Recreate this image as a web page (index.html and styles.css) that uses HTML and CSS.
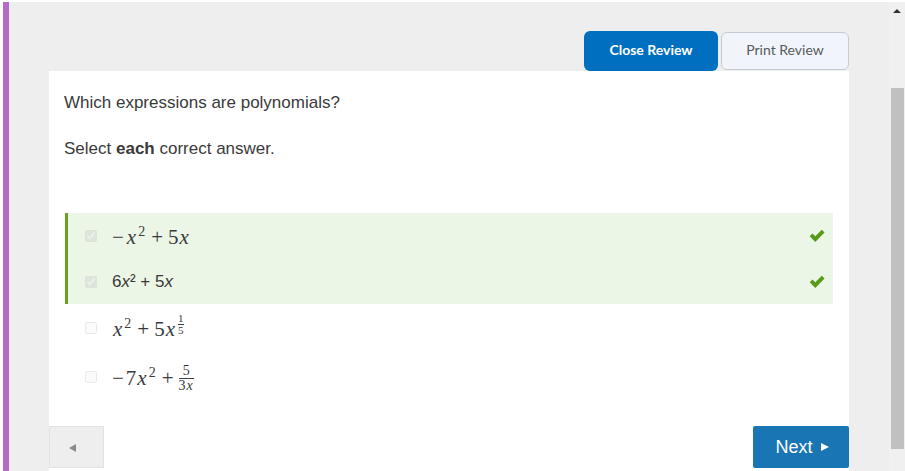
FILE: index.html
```html
<!DOCTYPE html>
<html lang="en">
<head>
    <meta charset="UTF-8">
    <meta name="viewport" content="width=device-width, initial-scale=1.0">
    <title>Review</title>
    <link rel="stylesheet" href="styles.css">
</head>
<body>
    <div class="page">
        <div class="accent"></div>
        <div class="main">
            <div class="toolbar">
                <button class="btn-close">Close Review</button>
                <button class="btn-print">Print Review</button>
            </div>
            <div class="panel">
                <p class="question">Which expressions are polynomials?</p>
                <p class="question">Select <b>each</b> correct answer.</p>

                <div class="answers">
                    <div class="answer correct">
                        <input type="checkbox" checked disabled>
                        <span class="math"><span class="op">&minus;</span><i>x</i><sup>2</sup><span class="op plus">+</span>5<i>x</i></span>
                        <svg class="tick" viewBox="0 0 14 12"><path d="M0.6 6.2 L3 3.9 L5.5 6.3 L11.2 0.6 L13.6 2.9 L5.5 11.2 Z" fill="#5a9a1a"/></svg>
                    </div>
                    <div class="answer correct">
                        <input type="checkbox" checked disabled>
                        <span class="plain">6<i>x</i>² + 5<i>x</i></span>
                        <svg class="tick" viewBox="0 0 14 12"><path d="M0.6 6.2 L3 3.9 L5.5 6.3 L11.2 0.6 L13.6 2.9 L5.5 11.2 Z" fill="#5a9a1a"/></svg>
                    </div>
                    <div class="answer">
                        <input type="checkbox" disabled>
                        <span class="math"><i>x</i><sup>2</sup><span class="op plus">+</span>5<i>x</i><span class="frac frac-sup"><span class="num">1</span><span>5</span></span></span>
                    </div>
                    <div class="answer">
                        <input type="checkbox" disabled>
                        <span class="math"><span class="op">&minus;</span>7<i>x</i><sup>2</sup><span class="op plus">+</span><span class="frac"><span class="num">5</span><span>3<i>x</i></span></span></span>
                    </div>
                </div>

                <div class="nav">
                    <button class="btn-prev"><span class="arrow-left"></span></button>
                    <button class="btn-next">Next<span class="arrow-right"></span></button>
                </div>
            </div>
        </div>
        <div class="scrollbar">
            <div class="scroll-up"></div>
            <div class="scroll-thumb"></div>
        </div>
    </div>
</body>
</html>
```

FILE: styles.css
```css
html, body {
    margin: 0;
    height: 471px;
    overflow: hidden;
    background: white;
}
.page {
    display: flex;
    height: 469px;
    margin-top: 2px;
    padding-left: 3px;
}
.accent {
    width: 6px;
    background-color: #b56cc9;
}
.main {
    flex: 1;
    background-color: #eeeeee;
    padding: 0 40px;
}
.toolbar {
    display: flex;
    justify-content: flex-end;
    align-items: center;
    gap: 3px;
    height: 40px;
    padding-top: 29px;
}
.toolbar button {
    font-family: Lato, sans-serif;
    font-size: 14px;
    cursor: pointer;
    padding-bottom: 5px;
}
.btn-close {
    width: 134px;
    height: 40px;
    background-color: #006fbf;
    color: white;
    font-weight: bold;
    border: none;
    border-radius: 6px;
}
.btn-print {
    width: 128px;
    height: 38px;
    background-color: #f1f5fb;
    color: #565a5c;
    border: 1px solid #c4ccd3;
    border-radius: 6px;
}
.panel {
    background: white;
    height: 400px;
    padding: 1px 16px 0 15px;
    box-sizing: border-box;
    position: relative;
}
.question {
    margin: 0;
    font-family: "Liberation Sans", Arial, sans-serif;
    font-size: 17px;
    line-height: 46px;
    height: 46px;
    color: #3a3a3a;
}
.question:first-child {
    margin-top: 8px;
}
.answers {
    margin-top: 41px;
    margin-left: 1px;
}
.answer {
    display: flex;
    align-items: center;
    height: 46px;
    padding-left: 20px;
    padding-right: 8px;
    color: #3a3a3a;
}
.answer:nth-child(2) {
    height: 45px;
}
.answer:nth-child(3) {
    height: 48px;
}
.answer:nth-child(4) {
    height: 50px;
}
.answer.correct {
    background-color: #ebf6e6;
    border-left: 3px solid #6aa01f;
    padding-left: 17px;
}
.answer input {
    width: 12px;
    height: 12px;
    margin: 0 15px 0 0;
    opacity: 0.45;
}
.math {
    font-family: "Liberation Serif", "Times New Roman", serif;
    font-size: 21px;
    color: #3a3a3a;
    display: inline-flex;
    align-items: center;
    padding-top: 2px;
}
.math i {
    padding-right: 1px;
    padding-left: 1px;
}
.math sup {
    font-size: 14px;
    line-height: 1;
    margin-top: -10px;
    margin-left: 1px;
}
.op {
    margin-right: 2px;
}
.op.plus {
    margin: 0 5px 0 6px;
}
.plain {
    font-family: "Liberation Sans", Arial, sans-serif;
    font-size: 17px;
}
.frac {
    display: inline-flex;
    flex-direction: column;
    align-items: center;
    font-size: 14px;
    line-height: 14px;
}
.frac .num {
    border-bottom: 1px solid #3a3a3a;
    align-self: stretch;
    text-align: center;
}
.frac-sup {
    font-size: 11px;
    line-height: 11px;
    margin-top: -10px;
    margin-left: 2px;
}
.tick {
    width: 16px;
    height: 14px;
    margin-left: auto;
}
.nav {
    position: absolute;
    left: 0;
    right: 0;
    top: 355px;
    display: flex;
    justify-content: space-between;
}
.btn-prev {
    width: 55px;
    height: 42px;
    background-color: #eeeeee;
    border: 1px solid #e2e2e2;
    cursor: pointer;
    padding: 0 8px 0 0;
}
.arrow-left {
    display: inline-block;
    border-style: solid;
    border-width: 4px 7px 4px 0;
    border-color: transparent #8a8a8a transparent transparent;
}
.btn-next {
    width: 96px;
    height: 42px;
    background-color: #1a75b5;
    color: white;
    font-family: "Liberation Sans", Arial, sans-serif;
    font-size: 18px;
    border: none;
    border-radius: 2px;
    cursor: pointer;
    padding: 0 0 0 2px;
}
.arrow-right {
    display: inline-block;
    margin-left: 8px;
    vertical-align: 2px;
    border-style: solid;
    border-width: 4px 0 4px 8px;
    border-color: transparent transparent transparent white;
}
.scrollbar {
    width: 16px;
    background-color: #f0f0f0;
    display: flex;
    flex-direction: column;
    align-items: center;
}
.scroll-up {
    margin-top: 7px;
    border-style: solid;
    border-width: 0 4px 4px 4px;
    border-color: transparent transparent #333333 transparent;
}
.scroll-thumb {
    width: 13px;
    height: 361px;
    margin-top: 75px;
    background-color: #c0c0c0;
}
```
